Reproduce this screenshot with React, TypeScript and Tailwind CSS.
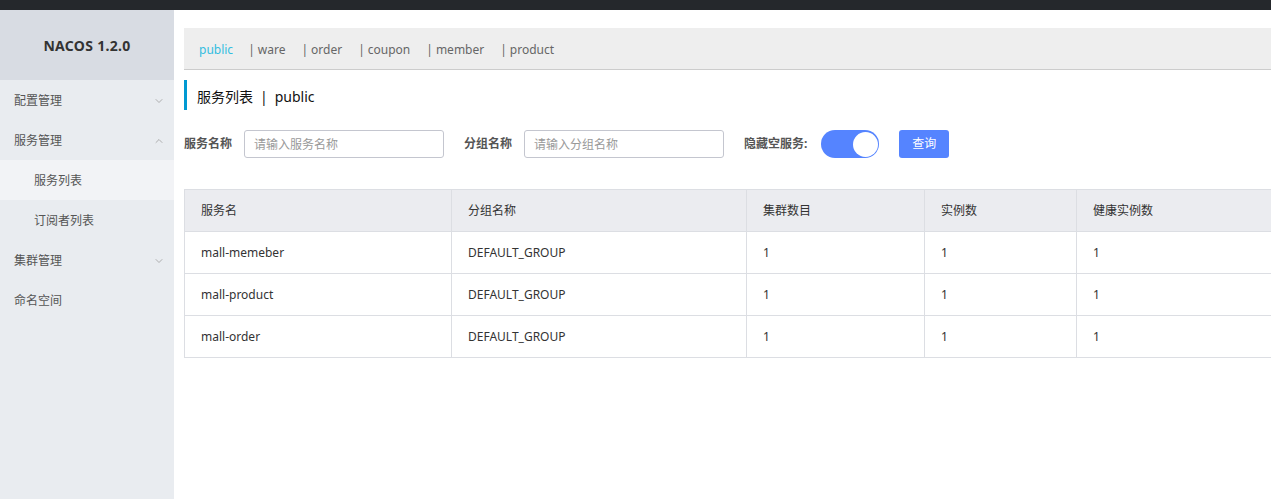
import { ChevronDown, ChevronUp } from 'lucide-react';

const namespaces = ['public', 'ware', 'order', 'coupon', 'member', 'product'];

const services = [
  { name: 'mall-memeber', group: 'DEFAULT_GROUP', clusters: 1, instances: 1, healthy: 1 },
  { name: 'mall-product', group: 'DEFAULT_GROUP', clusters: 1, instances: 1, healthy: 1 },
  { name: 'mall-order', group: 'DEFAULT_GROUP', clusters: 1, instances: 1, healthy: 1 },
];

function MenuItem({ label, sub, active, open }: { label: string; sub?: boolean; active?: boolean; open?: boolean | null }) {
  return (
    <div
      className={`h-10 flex items-center justify-between pr-[9px] pt-[2px] text-[12px] text-[#555] ${sub ? 'pl-[34px]' : 'pl-[14px]'} ${active ? 'bg-[#f2f3f6]' : ''}`}
    >
      <span>{label}</span>
      {open === true && <ChevronUp size={12} strokeWidth={1.5} className="text-[#999]" />}
      {open === false && <ChevronDown size={12} strokeWidth={1.5} className="text-[#999]" />}
    </div>
  );
}

export default function App() {
  return (
    <div className="min-h-screen flex flex-col bg-white font-['Noto_Sans','Noto_Sans_CJK_SC',sans-serif]">
      <div className="h-[10px] bg-[#25282c]" />
      <div className="flex flex-1">
        {/* sidebar */}
        <aside className="w-[174px] shrink-0 bg-[#e9ecf0]">
          <div className="h-[70px] bg-[#d8dce3] flex items-center justify-center text-[14px] font-bold text-[#333] tracking-[0.3px]">
            NACOS 1.2.0
          </div>
          <MenuItem label="配置管理" open={false} />
          <MenuItem label="服务管理" open={true} />
          <MenuItem label="服务列表" sub active />
          <MenuItem label="订阅者列表" sub />
          <MenuItem label="集群管理" open={false} />
          <MenuItem label="命名空间" />
        </aside>

        {/* main */}
        <main className="flex-1 overflow-hidden pl-[10px] pt-[18px]">
          <div className="w-[1120px]">
            <div className="h-[42px] bg-[#eeeeee] border-b border-[#cccccc] flex items-center pl-[15px] pt-[2px] text-[12px]">
              {namespaces.map((ns, i) => (
                <span key={ns} className={i === 0 ? 'text-[#33bde0] mr-[15px]' : 'text-[#666] mr-[16px]'}>
                  {i > 0 && <span className="mr-[3px]">|</span>}
                  {ns}
                </span>
              ))}
            </div>

            <div className="mt-[10px] h-[30px] border-l-[3px] border-[#0199d2] flex items-center pl-[10px] pt-[3px] text-[14px] text-[#111]">
              服务列表<span className="mx-[7px]">|</span>public
            </div>

            <div className="mt-[20px] flex items-center h-[28px] text-[12px]">
              <span className="font-bold text-[#555] w-[48px]">服务名称</span>
              <input
                className="ml-[12px] w-[200px] h-[28px] border border-[#c4c6cf] rounded-[3px] px-[9px] text-[12px] placeholder:text-[#999] outline-none"
                placeholder="请输入服务名称"
              />
              <span className="ml-[20px] font-bold text-[#555] w-[48px]">分组名称</span>
              <input
                className="ml-[12px] w-[200px] h-[28px] border border-[#c4c6cf] rounded-[3px] px-[9px] text-[12px] placeholder:text-[#999] outline-none"
                placeholder="请输入分组名称"
              />
              <span className="ml-[20px] font-bold text-[#555]">隐藏空服务:</span>
              <div className="ml-[14px] w-[58px] h-[28px] rounded-full bg-[#5584ff] flex items-center justify-end pr-[1px]">
                <div className="w-[25px] h-[25px] rounded-full bg-white" />
              </div>
              <button className="ml-[20px] w-[50px] h-[28px] rounded-[3px] bg-[#5584ff] text-white text-[12px]">查询</button>
            </div>

            <table className="mt-[31px] w-full table-fixed border-collapse text-[12px] text-[#333]">
              <colgroup>
                <col className="w-[267px]" />
                <col className="w-[295px]" />
                <col className="w-[178px]" />
                <col className="w-[152px]" />
                <col />
              </colgroup>
              <thead>
                <tr className="h-[42px] bg-[#ebecf0]">
                  {['服务名', '分组名称', '集群数目', '实例数', '健康实例数'].map((h) => (
                    <th key={h} className="border border-[#dcdee3] text-left font-normal pl-[16px]">
                      {h}
                    </th>
                  ))}
                </tr>
              </thead>
              <tbody>
                {services.map((s) => (
                  <tr key={s.name} className="h-[42px]">
                    <td className="border border-[#dcdee3] pl-[16px]">{s.name}</td>
                    <td className="border border-[#dcdee3] pl-[16px]">{s.group}</td>
                    <td className="border border-[#dcdee3] pl-[16px]">{s.clusters}</td>
                    <td className="border border-[#dcdee3] pl-[16px]">{s.instances}</td>
                    <td className="border border-[#dcdee3] pl-[16px]">{s.healthy}</td>
                  </tr>
                ))}
              </tbody>
            </table>
          </div>
        </main>
      </div>
    </div>
  );
}
